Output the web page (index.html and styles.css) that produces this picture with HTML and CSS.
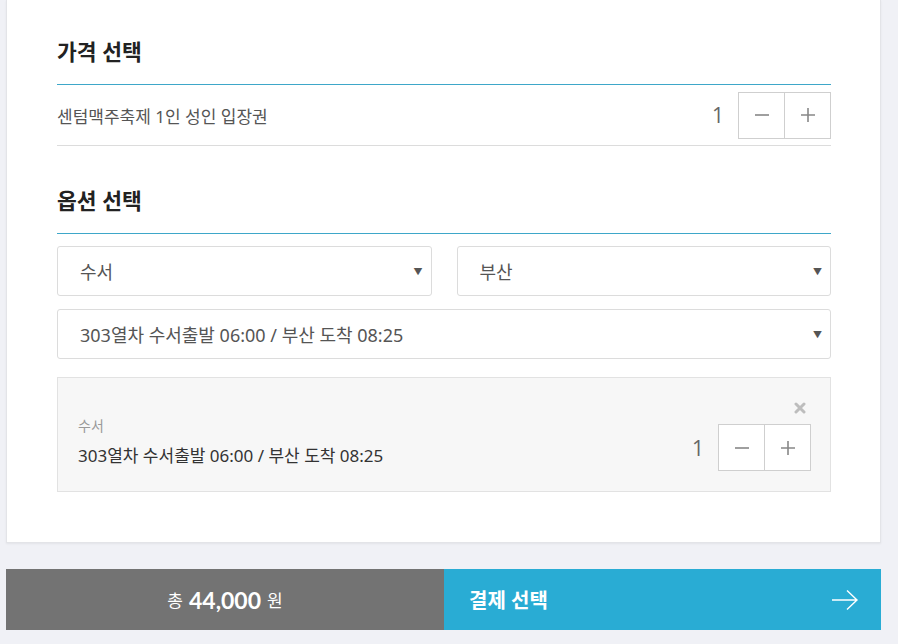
FILE: index.html
```html
<!DOCTYPE html>
<html lang="ko">
<head>
<meta charset="utf-8">
<link rel="stylesheet" href="styles.css">
</head>
<body>
<div class="page">
  <section class="card">
    <h2 class="section-title">가격 선택</h2>
    <div class="price-row">
      <span class="price-name">센텀맥주축제 1인 성인 입장권</span>
      <div class="qty">
        <span class="qty-num">1</span>
        <div class="stepper">
          <button class="step"><svg width="16" height="16" viewBox="0 0 16 16"><path d="M1 8H15" stroke="#888" stroke-width="1.6"/></svg></button>
          <button class="step"><svg width="16" height="16" viewBox="0 0 16 16"><path d="M1 8H15M8 1V15" stroke="#888" stroke-width="1.6"/></svg></button>
        </div>
      </div>
    </div>

    <h2 class="section-title second">옵션 선택</h2>
    <div class="select-grid">
      <div class="select"><span>수서</span><span class="caret">▼</span></div>
      <div class="select"><span>부산</span><span class="caret">▼</span></div>
      <div class="select wide"><span>303열차 수서출발 06:00 / 부산 도착 08:25</span><span class="caret">▼</span></div>
    </div>

    <div class="option-box">
      <div class="option-info">
        <span class="option-label">수서</span>
        <span class="option-text">303열차 수서출발 06:00 / 부산 도착 08:25</span>
      </div>
      <div class="option-side">
        <svg class="remove" width="12" height="12" viewBox="0 0 12 12"><path d="M2 2L10 10M10 2L2 10" stroke="#bdbdbd" stroke-width="3" stroke-linecap="round"/></svg>
        <div class="qty">
          <span class="qty-num">1</span>
          <div class="stepper">
            <button class="step"><svg width="16" height="16" viewBox="0 0 16 16"><path d="M1 8H15" stroke="#888" stroke-width="1.6"/></svg></button>
            <button class="step"><svg width="16" height="16" viewBox="0 0 16 16"><path d="M1 8H15M8 1V15" stroke="#888" stroke-width="1.6"/></svg></button>
          </div>
        </div>
      </div>
    </div>
  </section>

  <div class="paybar">
    <div class="total"><span class="total-unit">총</span><strong class="total-num">44,000</strong><span class="total-unit">원</span></div>
    <button class="pay">
      <span>결제 선택</span>
      <svg width="28" height="22" viewBox="0 0 28 22"><path d="M1 11H26M16 1.5L26 11L16 20.5" fill="none" stroke="#fff" stroke-width="1.4"/></svg>
    </button>
  </div>
</div>
</body>
</html>
```

FILE: styles.css
```css
* { box-sizing: border-box; }
html, body {
  margin: 0;
  padding: 0;
  background: #f0f1f6;
  font-family: "Noto Sans", "Noto Sans CJK KR", sans-serif;
  color: #333;
}
.page {
  width: 881px;
  padding: 0 0 0 6px;
}
.card {
  background: #fff;
  border: 1px solid #e3e4e8;
  border-top: none;
  box-shadow: 0 1px 2px rgba(0,0,0,0.06);
  padding: 37px 49px 50px 50px;
}
.section-title {
  margin: 0;
  font-size: 21.5px;
  line-height: 30px;
  font-weight: 700;
  color: #222;
  padding-bottom: 17px;
  border-bottom: 1px solid #3ea7c9;
}
.section-title.second {
  margin-top: 40px;
}
.price-row {
  height: 61px;
  display: flex;
  align-items: center;
  justify-content: space-between;
  border-bottom: 1px solid #dcdcdc;
}
.price-name {
  font-size: 17px;
  color: #555;
}
.qty {
  display: flex;
  align-items: center;
  gap: 14px;
}
.qty-num {
  font-family: "Open Sans", "Noto Sans", sans-serif;
  font-size: 21px;
  color: #666;
}
.stepper {
  display: flex;
  border: 1px solid #cfcfcf;
  background: #fff;
}
.step {
  width: 45px;
  height: 45px;
  border: none;
  background: #fff;
  padding: 0;
  display: flex;
  align-items: center;
  justify-content: center;
}
.step + .step {
  border-left: 1px solid #cfcfcf;
  width: 46px;
}
.select-grid {
  margin-top: 12px;
  display: grid;
  grid-template-columns: 1fr 1fr;
  column-gap: 25px;
  row-gap: 13px;
}
.select {
  height: 50px;
  border: 1px solid #dcdcdc;
  border-radius: 3px;
  display: flex;
  align-items: center;
  justify-content: space-between;
  padding: 0 8px 0 22px;
  font-size: 18px;
  color: #555;
}
.select.wide {
  grid-column: 1 / span 2;
}
.caret {
  font-size: 9px;
  color: #555;
}
.option-box {
  margin-top: 18px;
  background: #f7f7f7;
  border: 1px solid #e2e2e2;
  padding: 24px 19px 20px 20px;
  display: flex;
  justify-content: space-between;
  align-items: flex-end;
}
.option-info {
  display: flex;
  flex-direction: column;
}
.option-label {
  font-size: 14px;
  color: #999;
  line-height: 20px;
  margin-bottom: 5px;
}
.option-text {
  font-size: 17px;
  color: #333;
  line-height: 30px;
}
.option-side {
  display: flex;
  flex-direction: column;
  align-items: flex-end;
  gap: 10px;
}
.remove {
  margin-right: 5px;
}
.paybar {
  margin-top: 26px;
  display: flex;
  height: 61px;
}
.total {
  width: 438px;
  background: #737373;
  color: #fff;
  display: flex;
  align-items: center;
  justify-content: center;
  gap: 6px;
}
.total-unit {
  font-size: 17px;
}
.total-num {
  font-family: "Lato", "Open Sans", sans-serif;
  font-size: 23px;
  font-weight: 700;
}
.pay {
  flex: 1;
  border: none;
  background: #29acd4;
  color: #fff;
  font-family: "Noto Sans", "Noto Sans CJK KR", sans-serif;
  font-size: 20px;
  font-weight: 700;
  display: flex;
  align-items: center;
  justify-content: space-between;
  padding: 0 22px 0 25px;
}
```
